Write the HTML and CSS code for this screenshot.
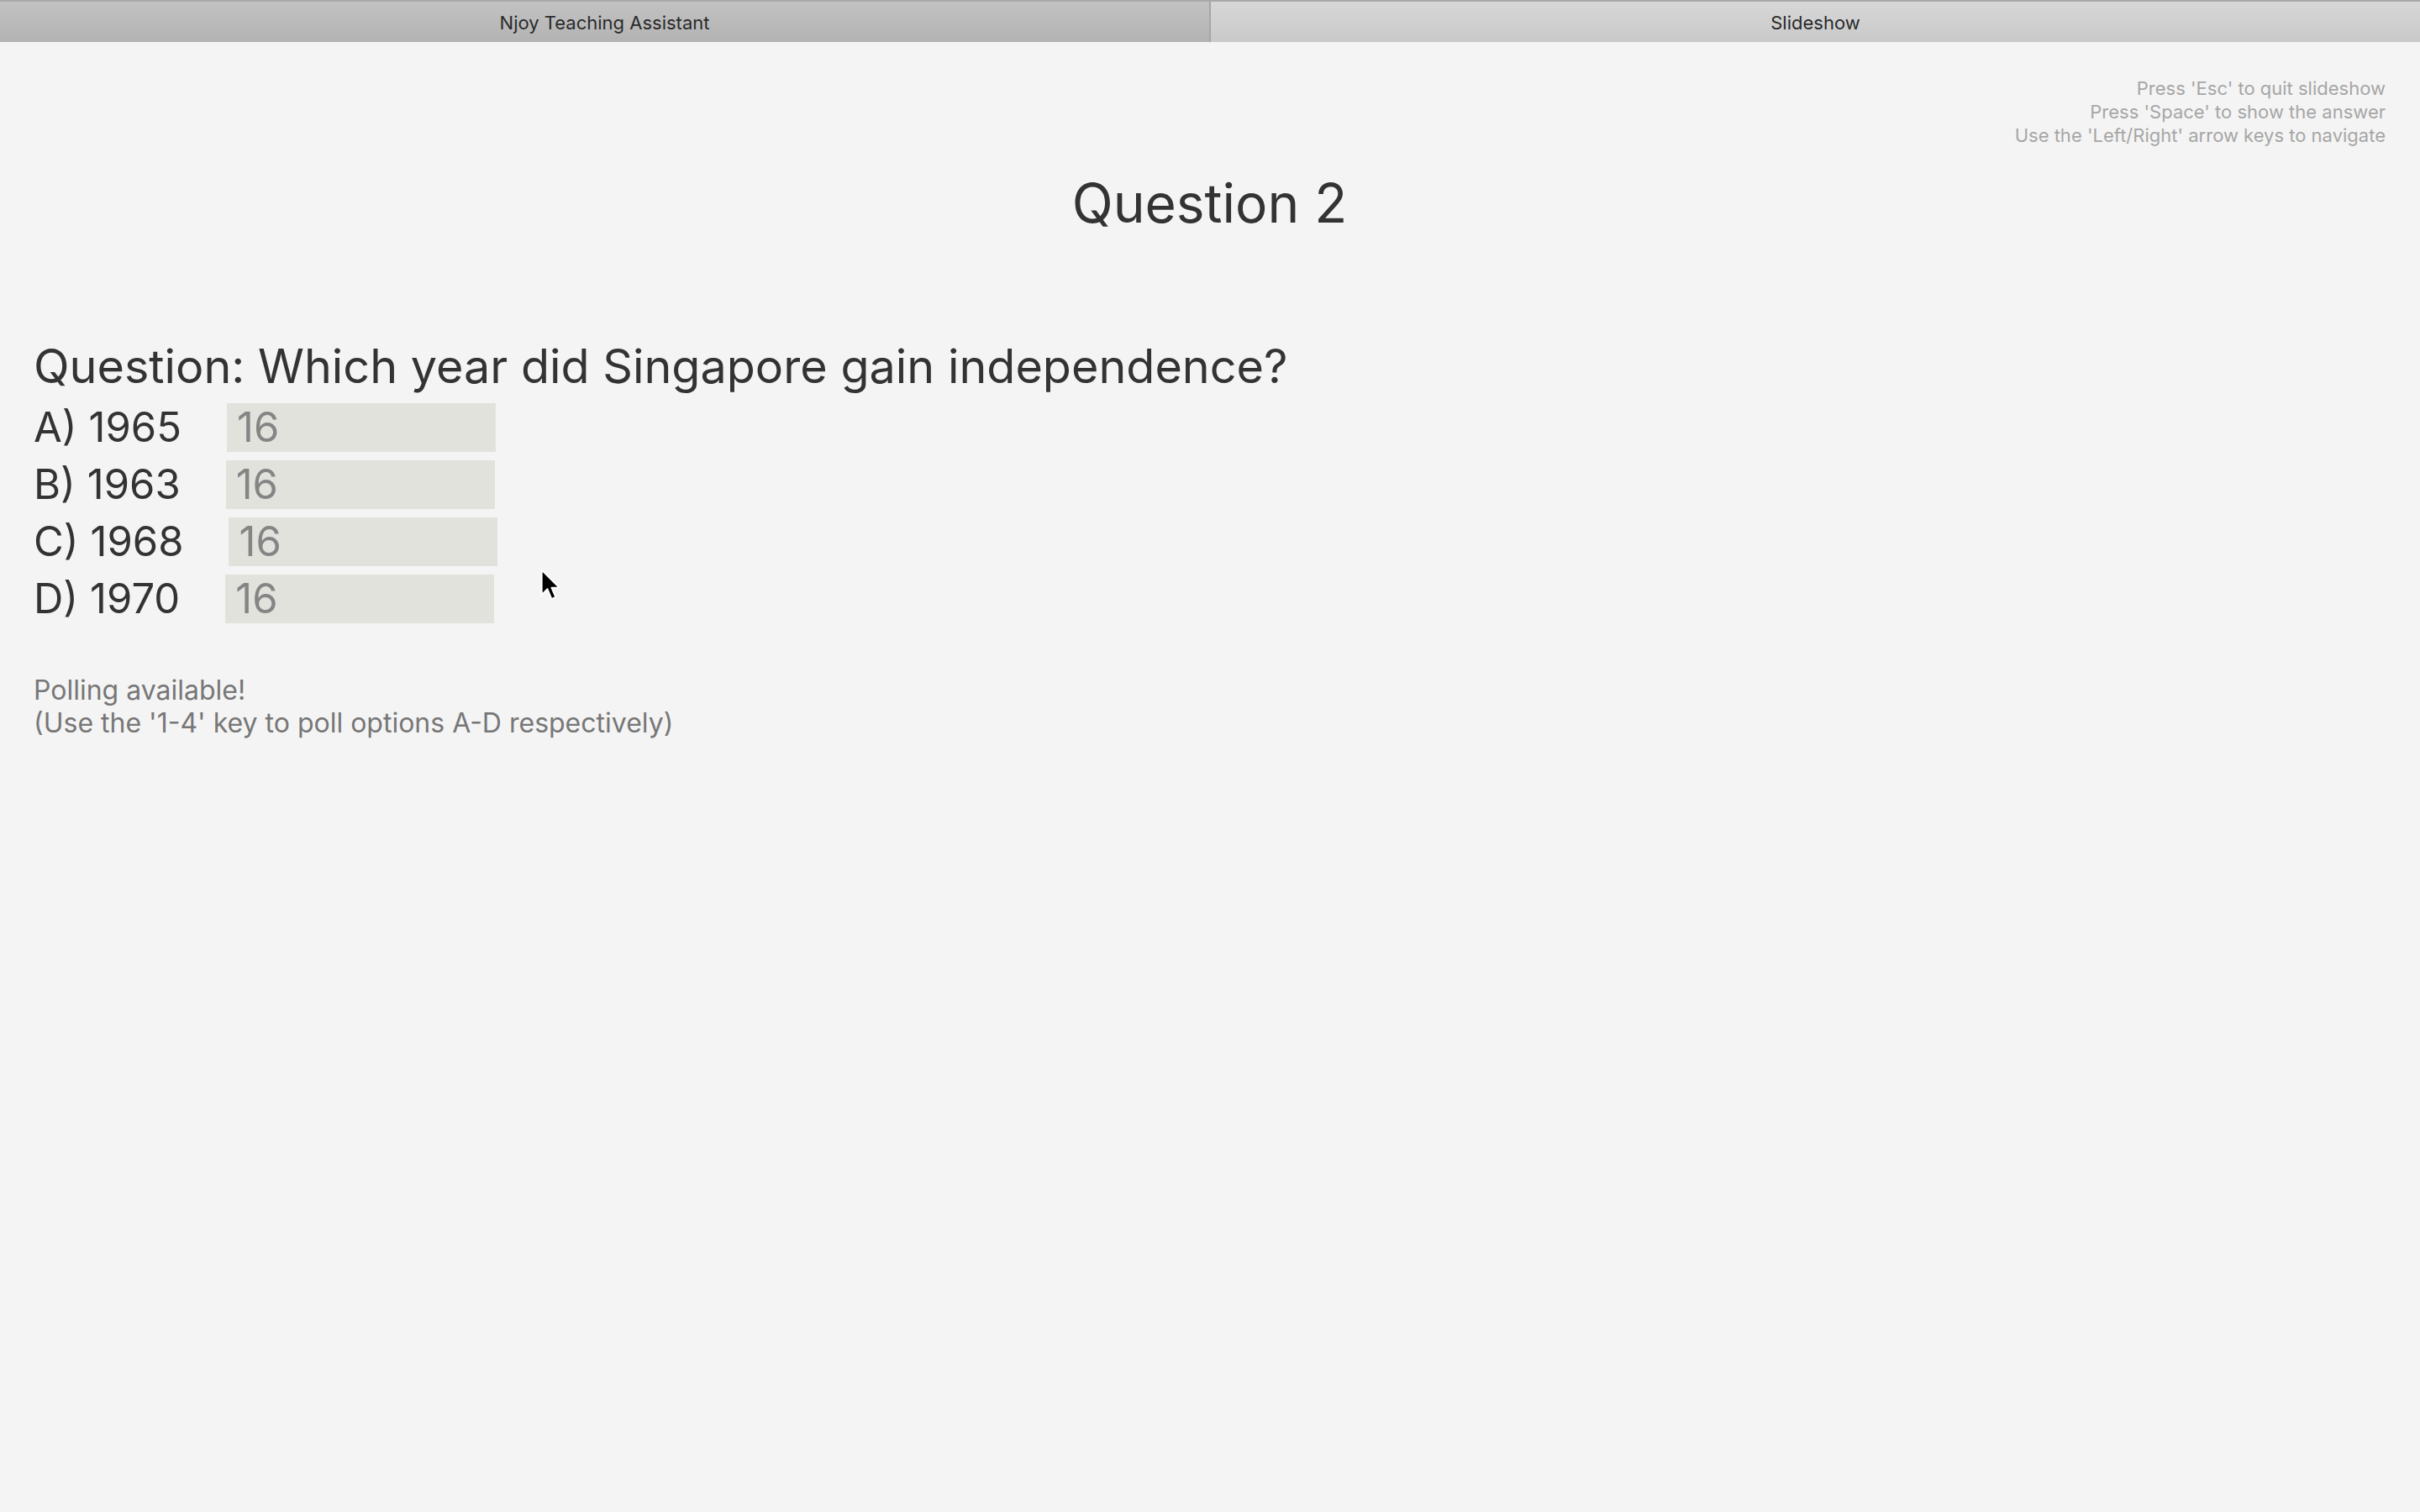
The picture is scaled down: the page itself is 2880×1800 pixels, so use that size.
FILE: index.html
```html
<!DOCTYPE html>
<html>
<head>
<meta charset="utf-8">
<title>Slideshow</title>
<link rel="stylesheet" href="styles.css">
</head>
<body>
<div class="tabbar">
  <div class="tab tab-left">Njoy Teaching Assistant</div>
  <div class="tab tab-right">Slideshow</div>
</div>
<main class="slide">
  <div class="hints">
    <div>Press 'Esc' to quit slideshow</div>
    <div>Press 'Space' to show the answer</div>
    <div>Use the 'Left/Right' arrow keys to navigate</div>
  </div>
  <h1 class="title">Question 2</h1>
  <h2 class="question">Question: Which year did Singapore gain independence?</h2>
  <div class="options">
    <div class="option"><span class="label">A) 1965</span><span class="count">16</span></div>
    <div class="option"><span class="label">B) 1963</span><span class="count">16</span></div>
    <div class="option"><span class="label">C) 1968</span><span class="count">16</span></div>
    <div class="option"><span class="label">D) 1970</span><span class="count">16</span></div>
  </div>
  <div class="polling">
    <div>Polling available!</div>
    <div>(Use the '1-4' key to poll options A-D respectively)</div>
  </div>
</main>
<svg class="cursor" width="30" height="42" viewBox="0 0 24 34">
  <path d="M2 2 L2 26 L7.5 20.5 L11.5 30 L15.5 28.3 L11.6 19.2 L19 19 Z" fill="#000" stroke="#fff" stroke-width="1.6" stroke-linejoin="round"/>
</svg>
</body>
</html>
```
FILE: styles.css
```css
html, body {
  margin: 0;
  padding: 0;
}
body {
  background: #f4f4f4;
  font-family: Inter, "Liberation Sans", sans-serif;
  color: #333333;
  width: 2880px;
  height: 1800px;
  overflow: hidden;
  position: relative;
}
.tabbar {
  display: flex;
  height: 50px;
  box-sizing: border-box;
  border-top: 2px solid #a9a9a9;
}
.tab {
  flex: 1;
  display: flex;
  align-items: center;
  justify-content: center;
  font-size: 22px;
  color: #2a2a2a;
  padding-top: 2px;
}
.tab-left {
  background: linear-gradient(#c2c2c2, #b3b3b3);
  border-right: 2px solid #a6a6a6;
}
.tab-right {
  background: linear-gradient(#d7d7d7, #c9c9c9);
}
.slide {
  display: flex;
  flex-direction: column;
  padding: 41px 41px 0 40px;
}
.hints {
  align-self: flex-end;
  text-align: right;
  font-size: 22px;
  line-height: 28px;
  color: #a6a6a6;
}
.title {
  margin: 28px 0 0 0;
  align-self: center;
  font-size: 64px;
  font-weight: 400;
  line-height: 78px;
  color: #333333;
}
.question {
  margin: 121px 0 0 0;
  font-size: 55.7px;
  font-weight: 400;
  line-height: 68px;
  color: #333333;
}
.options {
  display: flex;
  flex-direction: column;
  gap: 10px;
  margin-top: 10px;
}
.option {
  display: flex;
  align-items: center;
  gap: 54px;
  height: 58px;
  font-size: 49px;
  line-height: 58px;
}
.label {
  color: #333333;
}
.count {
  width: 320px;
  height: 58px;
  box-sizing: border-box;
  padding-left: 12px;
  background: #e2e2dd;
  color: #858585;
}
.polling {
  margin-top: 60px;
  font-size: 32px;
  line-height: 39px;
  color: #777777;
}
.cursor {
  position: absolute;
  left: 642px;
  top: 676px;
}
```
